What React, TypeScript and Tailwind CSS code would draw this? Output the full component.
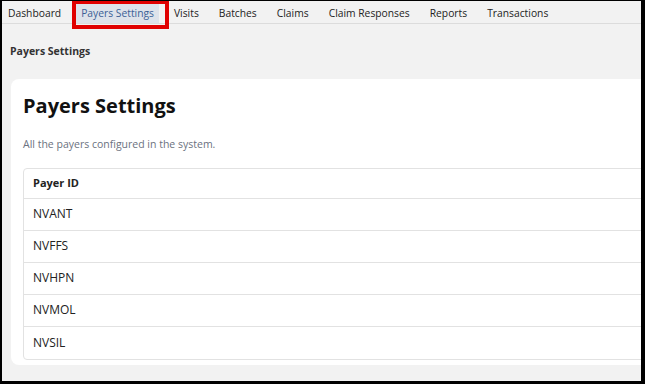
const tabs = [
  "Dashboard",
  "Payers Settings",
  "Visits",
  "Batches",
  "Claims",
  "Claim Responses",
  "Reports",
  "Transactions",
];

const payers = ["NVANT", "NVFFS", "NVHPN", "NVMOL", "NVSIL"];

export default function App() {
  return (
    <div
      className="h-[384px] w-[645px] overflow-hidden border-t border-b-[3px] border-l-2 border-r-4 border-black bg-[#f2f2f2] text-[#222]"
      style={{ fontFamily: '"Open Sans", "Noto Sans", Arial, sans-serif' }}
    >
      <div className="relative">
        <nav className="flex h-[23px] items-stretch gap-[20px] border-b border-[#dcdcdc] pl-[6px] text-[10.3px]">
          {tabs.map((t) =>
            t === "Payers Settings" ? (
              <span key={t} className="-mx-[5px] flex items-center bg-[#dde2ea] px-[5px] pt-[3px] text-[#3b5f96]">
                {t}
              </span>
            ) : (
              <span key={t} className="flex items-center pt-[3px]">
                {t}
              </span>
            ),
          )}
        </nav>
        <div className="absolute left-[70px] top-[-1px] h-[29px] w-[97px] border-4 border-[#e00000]" />
      </div>

      <div className="px-2 pt-[20px] text-[10.5px] font-bold text-[#333]">Payers Settings</div>

      <div className="ml-[9px] mt-[19px] w-[660px] rounded-lg bg-white pb-[5px] pl-3 pt-[13px]">
        <h1 className="text-[20px] font-bold leading-[28px] text-[#111]">Payers Settings</h1>
        <p className="mt-[17px] text-[10.5px] text-[#6b7280]">All the payers configured in the system.</p>
        <div className="mt-[15px] rounded-[4px] border border-[#e2e2e2]">
          <div className="flex h-[30px] items-center border-b border-[#e2e2e2] pl-[9px] text-[11px] font-bold">
            Payer ID
          </div>
          {payers.map((p, i) => (
            <div
              key={p}
              className={`flex h-[32px] items-center pl-[9px] text-[12px] ${i < payers.length - 1 ? "border-b border-[#e2e2e2]" : ""}`}
            >
              {p}
            </div>
          ))}
        </div>
      </div>
    </div>
  );
}
